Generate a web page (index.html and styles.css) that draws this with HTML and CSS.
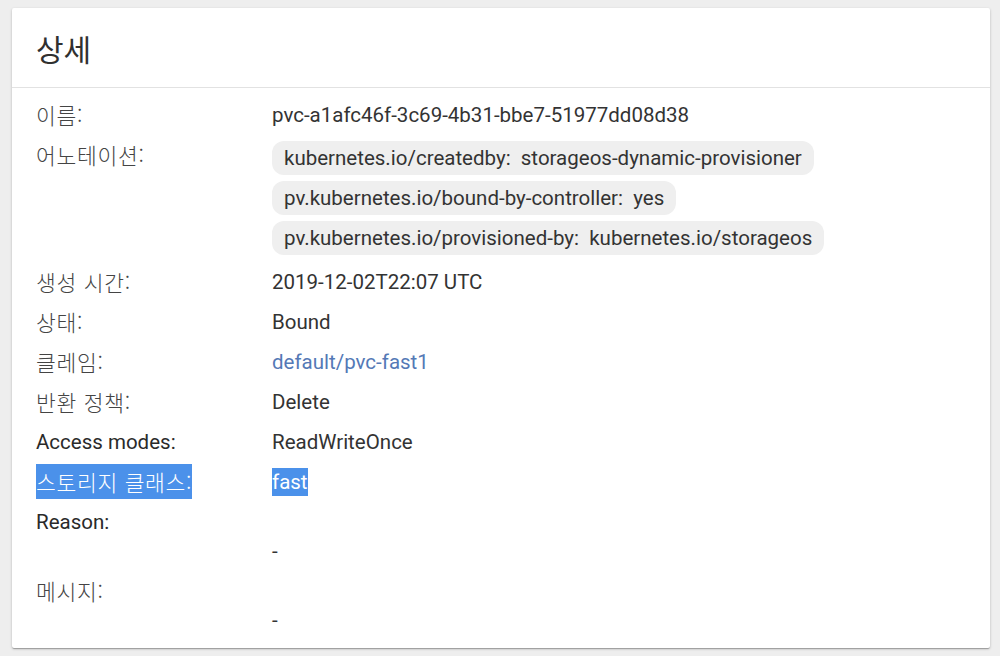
FILE: index.html
```html
<!DOCTYPE html>
<html lang="ko">
<head>
<meta charset="utf-8">
<title>상세</title>
<link rel="stylesheet" href="styles.css">
</head>
<body>
<div class="card">
  <div class="card-header">
    <h1 class="title">상세</h1>
  </div>
  <div class="card-body">
    <div class="row">
      <div class="label ko">이름:</div>
      <div class="value">pvc-a1afc46f-3c69-4b31-bbe7-51977dd08d38</div>
    </div>
    <div class="row row-chips">
      <div class="label ko">어노테이션:</div>
      <div class="value chips">
        <span class="chip">kubernetes.io/createdby:&nbsp; storageos-dynamic-provisioner</span>
        <span class="chip">pv.kubernetes.io/bound-by-controller:&nbsp; yes</span>
        <span class="chip">pv.kubernetes.io/provisioned-by:&nbsp; kubernetes.io/storageos</span>
      </div>
    </div>
    <div class="row">
      <div class="label ko">생성 시간:</div>
      <div class="value">2019-12-02T22:07 UTC</div>
    </div>
    <div class="row">
      <div class="label ko">상태:</div>
      <div class="value">Bound</div>
    </div>
    <div class="row">
      <div class="label ko">클레임:</div>
      <div class="value"><a class="link" href="#">default/pvc-fast1</a></div>
    </div>
    <div class="row">
      <div class="label ko">반환 정책:</div>
      <div class="value">Delete</div>
    </div>
    <div class="row">
      <div class="label">Access modes:</div>
      <div class="value">ReadWriteOnce</div>
    </div>
    <div class="row">
      <div class="label ko"><span class="sel">스토리지 클래스:</span></div>
      <div class="value"><span class="sel">fast</span></div>
    </div>
    <div class="row row-tall">
      <div class="label">Reason:</div>
      <div class="value dash">-</div>
    </div>
    <div class="row row-tall">
      <div class="label ko">메시지:</div>
      <div class="value dash">-</div>
    </div>
  </div>
</div>
</body>
</html>
```

FILE: styles.css
```css
* { box-sizing: border-box; }

html, body {
  margin: 0;
  padding: 0;
}

body {
  background: #eeeeee;
  font-family: Roboto, "Noto Sans CJK KR", sans-serif;
  color: #303030;
  padding: 8px 10px 8px 12px;
}

.card {
  background: #ffffff;
  border-radius: 2px;
  box-shadow: 0 1px 3px rgba(0,0,0,0.2), 0 1px 1px rgba(0,0,0,0.14), 0 2px 1px -1px rgba(0,0,0,0.12);
  height: 640px;
  display: flex;
  flex-direction: column;
}

.card-header {
  height: 80px;
  border-bottom: 1px solid #e2e2e2;
  display: flex;
  align-items: center;
  padding: 0 24px;
}

.title {
  margin: 0;
  font-family: "Noto Sans CJK KR", sans-serif;
  font-weight: 400;
  font-size: 30px;
  color: #303030;
  line-height: 1;
}

.card-body {
  padding: 7px 24px 7px;
}

.row {
  display: flex;
  padding: 8px 0;
  font-size: 20.5px;
  line-height: 24px;
}

.label {
  width: 236px;
  flex: none;
  color: #2a2a2a;
}

.label.ko {
  font-family: "Noto Sans CJK KR", sans-serif;
  font-weight: 300;
  font-size: 21.5px;
  letter-spacing: 0.7px;
  color: #444444;
}

.value {
  flex: 1;
  color: #333333;
}

.row-chips {
  padding-bottom: 7px;
}

.chips {
  display: flex;
  flex-direction: column;
  align-items: flex-start;
  gap: 6px;
  margin-top: -2px;
}

.chip {
  background: #efefef;
  border-radius: 12px;
  padding: 5px 12px;
  font-size: 20.5px;
  line-height: 24px;
  color: #333333;
  white-space: nowrap;
}

.link {
  color: #5479b6;
  text-decoration: none;
}

.sel {
  background: #4b91ea;
  color: #ffffff;
  padding: 2px 0 2px;
}

.dash {
  padding-top: 29px;
}
```
